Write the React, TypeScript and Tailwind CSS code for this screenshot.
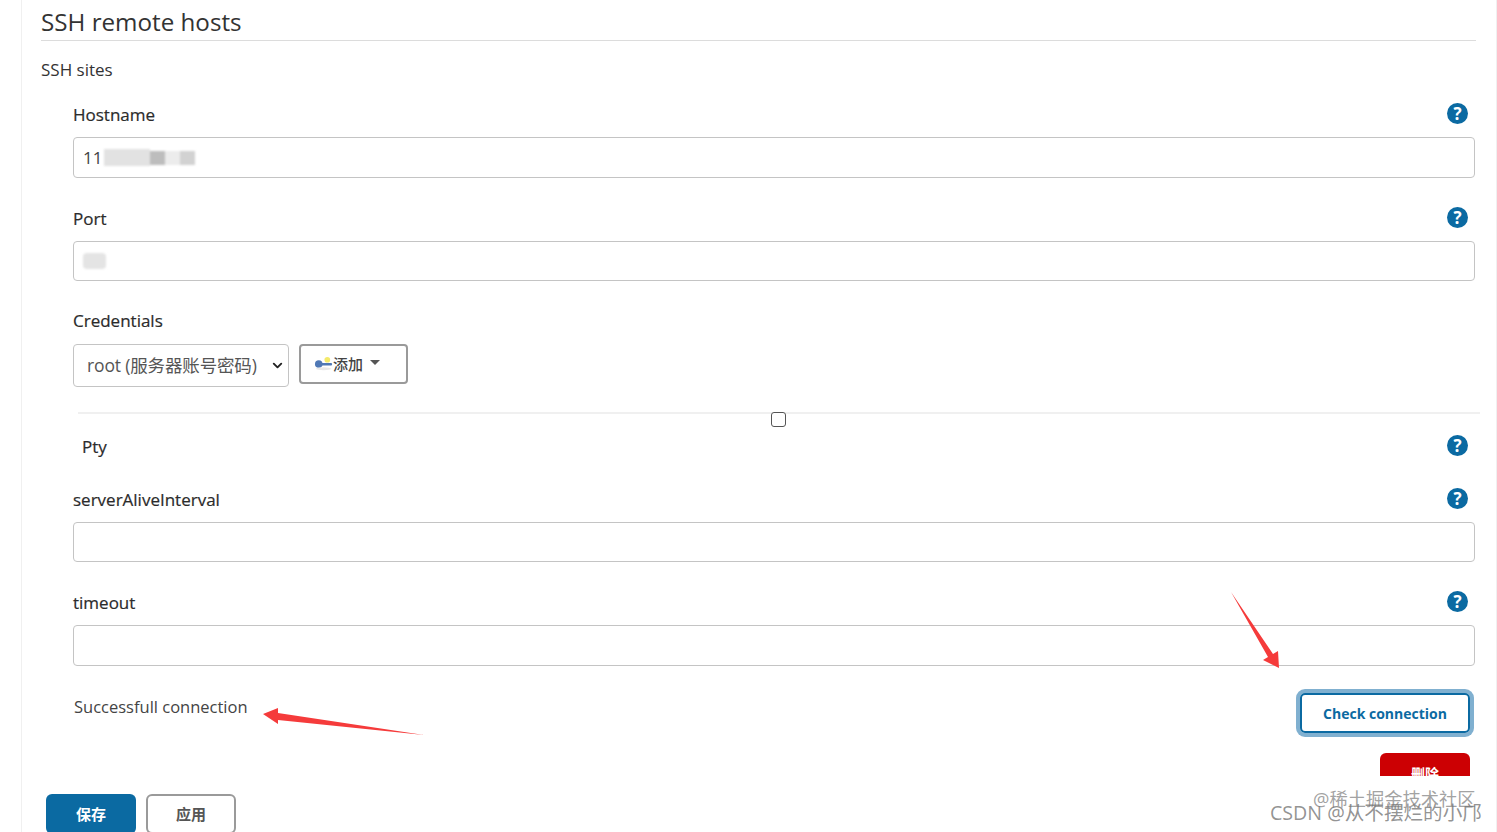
import { ChevronDown } from 'lucide-react';

const FONT = "font-['Open_Sans','Noto_Sans_CJK_SC',sans-serif]";

function HelpIcon() {
    return (
        <span className="mb-[4px] flex h-[21px] w-[21px] items-center justify-center rounded-full bg-[#0b6aa2] text-[17px] leading-none font-bold text-white">?</span>
    );
}

function FieldLabel({ label }: { label: string }) {
    return (
        <div className="flex h-[24px] items-center justify-between pr-[7px]">
            <span className="text-[17px] text-[#2b2b2b] [-webkit-text-stroke:0.2px_#2b2b2b]">{label}</span>
            <HelpIcon />
        </div>
    );
}

function TextField({ height, children }: { height: string; children?: React.ReactNode }) {
    return (
        <div className={`relative flex items-center rounded border border-[#c4c4c4] px-[9px] ${height}`}>
            {children}
        </div>
    );
}

export default function App() {
    return (
        <div className={`relative h-[832px] overflow-hidden bg-white ${FONT}`}>
            <div className="ml-[21px] h-full border-r border-l border-[#f0f0f0] pr-[21px] pl-[19px]">
                <h2 className="mr-[-1px] flex h-[41px] items-end border-b border-[#dcdcdc] text-[24.2px] leading-[36px] text-[#333]">SSH remote hosts</h2>
                <div className="mt-[17px] h-[24px] text-[17px] leading-[24px] text-[#333]">SSH sites</div>

                <div className="mt-[21px] pl-[32px]">
                    <FieldLabel label="Hostname" />
                    <div className="mt-[10px]">
                        <TextField height="h-[41px]">
                            <span className="text-[17px] text-[#444]">11</span>
                            <span className="ml-[2px] flex h-[17px] w-[98px] items-center blur-[1px]">
                                <span className="h-full w-[46px] bg-[#e2e2e2]" />
                                <span className="h-[14px] w-[15px] bg-[#bdbdbd]" />
                                <span className="h-[14px] w-[15px] bg-[#ececec]" />
                                <span className="h-[14px] w-[15px] bg-[#d2d2d2]" />
                            </span>
                        </TextField>
                    </div>

                    <div className="mt-[29px]"><FieldLabel label="Port" /></div>
                    <div className="mt-[10px]">
                        <TextField height="h-[40px]">
                            <span className="h-[16px] w-[23px] rounded bg-[#e4e4e4] blur-[1px]" />
                        </TextField>
                    </div>

                    <div className="mt-[28px] h-[24px] text-[17px] leading-[24px] text-[#2b2b2b] [-webkit-text-stroke:0.2px_#2b2b2b]">Credentials</div>
                    <div className="mt-[11px] flex items-start gap-[10px]">
                        <div className="flex h-[43px] w-[216px] items-center justify-between rounded border border-[#c4c4c4] pr-[3px] pl-[13px] text-[17.5px] text-[#555]">
                            <span className="whitespace-nowrap tracking-[-0.15px]">root (服务器账号密码)</span>
                            <ChevronDown className="h-[15px] w-[15px] shrink-0 text-[#222]" strokeWidth={3} />
                        </div>
                        <button className="flex h-[40px] w-[109px] items-center rounded border-2 border-[#9a9a9a] pl-[13px] text-[15px] font-medium text-[#444]">
                            <svg width="19" height="16" viewBox="0 0 20 16" className="shrink-0">
                                <circle cx="14" cy="3.5" r="3" fill="#f4ea6a" />
                                <rect x="6" y="7" width="13" height="2.5" rx="1" fill="#4f78b5" />
                                <circle cx="5" cy="8" r="4" fill="#4f78b5" />
                                <ellipse cx="10" cy="13" rx="8" ry="1.5" fill="#e8e8e8" />
                            </svg>
                            <span>添加</span>
                            <span className="mt-[-3px] ml-[7px] h-0 w-0 border-x-[5px] border-t-[5px] border-x-transparent border-t-[#555]" />
                        </button>
                    </div>
                </div>

                <div className="mt-[25px] mr-[-5px] ml-[37px] border-t-2 border-[#f0f0f0]" />

                <div className="pl-[32px]">
                    <div className="flex h-[14px] justify-center">
                        <span className="mt-[-2px] ml-[9px] h-[15px] w-[15px] rounded-[3px] border border-[#555] bg-white" />
                    </div>
                    <div className="mt-[7px] pl-[9px]"><FieldLabel label="Pty" /></div>

                    <div className="mt-[29px]"><FieldLabel label="serverAliveInterval" /></div>
                    <div className="mt-[10px]"><TextField height="h-[40px]" /></div>

                    <div className="mt-[29px]"><FieldLabel label="timeout" /></div>
                    <div className="mt-[10px]"><TextField height="h-[41px]" /></div>

                    <div className="mt-[27px] flex items-start justify-between">
                        <span className="mt-[2px] ml-[1px] text-[16.5px] leading-[24px] text-[#444]">Successfull connection</span>
                        <button className="mr-[5px] flex h-[40px] w-[170px] items-center justify-center rounded-[5px] border-2 border-[#0b6aa2] text-[14px] font-bold text-[#0b6aa2] [box-shadow:0_0_0_4px_#80b0d0]">
                            Check connection
                        </button>
                    </div>
                    <div className="mt-[20px] flex justify-end pr-[5px]">
                        <div className="h-[23px] w-[90px] overflow-hidden rounded-t-[6px] bg-[#cc0003] pt-[11px] text-center text-[14px] leading-[20px] font-bold text-white">删除</div>
                    </div>
                </div>

                <div className="mt-[18px] flex gap-[10px] pl-[5px]">
                    <button className="h-[40px] w-[90px] rounded-[6px] bg-[#0b6aa2] text-[15px] font-bold text-white">保存</button>
                    <button className="h-[40px] w-[90px] rounded-[6px] border-2 border-[#9a9a9a] text-[15px] font-bold text-[#555]">应用</button>
                </div>
            </div>

            {/* annotation arrows */}
            <svg className="absolute top-0 left-0" width="1497" height="832">
                <polygon points="1231,592 1273,654 1278,651 1279,668 1263,660 1268,657" fill="#f53b3b" />
                <polygon points="263,714 278,708 278,713 424,735 278,720 278,724" fill="#f53b3b" />
            </svg>

            {/* watermarks */}
            <span className="absolute top-[787px] left-[1313px] text-[18.3px] leading-[24px] whitespace-nowrap text-[#8a8a8a]/80">@稀土掘金技术社区</span>
            <span className="absolute top-[801px] left-[1270px] text-[19.6px] leading-[24px] whitespace-nowrap text-[#777]/80">CSDN @从不摆烂的小邝</span>
        </div>
    );
}
